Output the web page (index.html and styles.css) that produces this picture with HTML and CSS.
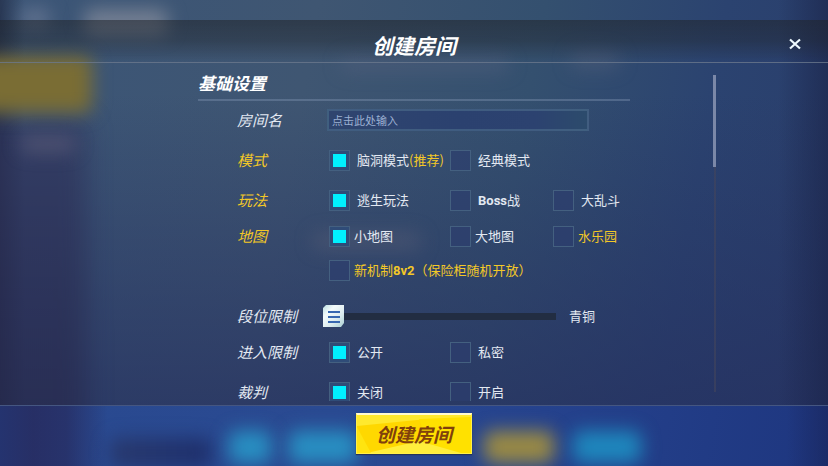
FILE: index.html
```
<!DOCTYPE html>
<html lang="zh-CN">
    <head>
        <meta charset="utf-8">
        <title>创建房间</title>
        <link rel="stylesheet" href="styles.css">
    </head>
    <body>
        <div class="backdrop">
            <div class="glow glow-rail"></div>
            <div class="glow glow-avatar"></div>
            <div class="glow glow-name"></div>
            <div class="glow glow-side"></div>
            <div class="glow glow-tab"></div>
            <div class="glow glow-tab2"></div>
            <div class="glow glow-list"></div>
            <div class="glow glow-center"></div>
        </div>
        <form class="dialog">
            <header class="top">
                <h1>创建房间</h1>
                <button type="button" class="close" aria-label="关闭">
                    <svg width="14" height="12" viewBox="0 0 14 12"><path d="M2 1.5L12 10.5M12 1.5L2 10.5"/></svg>
                </button>
            </header>

            <main class="main">
                <div class="settings">
                    <h2>基础设置</h2>
                    <div class="row first">
                        <label class="name" for="roomname">房间名</label>
                        <input type="text" id="roomname" class="roomname" placeholder="点击此处输入">
                    </div>
                    <div class="row" role="radiogroup" aria-labelledby="n-mode">
                        <span class="name hot" id="n-mode">模式</span>
                        <label class="opt"><input type="radio" name="mode" checked><span>脑洞模式<em>(推荐)</em></span></label>
                        <label class="opt"><input type="radio" name="mode"><span>经典模式</span></label>
                    </div>
                    <div class="row" role="radiogroup" aria-labelledby="n-play">
                        <span class="name hot" id="n-play">玩法</span>
                        <label class="opt"><input type="radio" name="play" checked><span>逃生玩法</span></label>
                        <label class="opt"><input type="radio" name="play"><span><b>Boss</b>战</span></label>
                        <label class="opt"><input type="radio" name="play"><span>大乱斗</span></label>
                    </div>
                    <div class="row near maps" role="radiogroup" aria-labelledby="n-map">
                        <span class="name hot" id="n-map">地图</span>
                        <label class="opt"><input type="radio" name="map" checked><span>小地图</span></label>
                        <label class="opt"><input type="radio" name="map"><span>大地图</span></label>
                        <label class="opt"><input type="radio" name="map"><span><em>水乐园</em></span></label>
                        <label class="opt wide"><input type="radio" name="map"><span><em>新机制<b>8v2</b>（保险柜随机开放）</em></span></label>
                    </div>
                    <div class="row far">
                        <label class="name" for="rank">段位限制</label>
                        <div class="rank">
                            <input type="range" id="rank" min="0" max="6" value="0">
                            <output for="rank">青铜</output>
                        </div>
                    </div>
                    <div class="row near" role="radiogroup" aria-labelledby="n-join">
                        <span class="name" id="n-join">进入限制</span>
                        <label class="opt"><input type="radio" name="join" checked><span>公开</span></label>
                        <label class="opt"><input type="radio" name="join"><span>私密</span></label>
                    </div>
                    <div class="row" role="radiogroup" aria-labelledby="n-judge">
                        <span class="name" id="n-judge">裁判</span>
                        <label class="opt"><input type="radio" name="judge" checked><span>关闭</span></label>
                        <label class="opt"><input type="radio" name="judge"><span>开启</span></label>
                    </div>
                </div>
                <div class="scrollbar"><div class="thumb"></div></div>
            </main>

            <footer class="bottom">
                <div class="glow glow-dark"></div>
                <div class="glow glow-b1"></div>
                <div class="glow glow-b2"></div>
                <div class="glow glow-b3"></div>
                <div class="glow glow-b4"></div>
                <button type="submit" class="create">
                    <svg class="facets" viewBox="0 0 114 38" preserveAspectRatio="none">
                        <path d="M0 0H114V3L60 5L0 11Z" fill="#ffe92e"/>
                        <path d="M62 4L114 2V38H88L70 26Z" fill="#ffe100"/>
                        <path d="M10 38L62 26L104 38Z" fill="#ffee3c"/>
                        <path d="M0 12L14 38H0Z" fill="#ffe410"/>
                    </svg>
                    <span>创建房间</span>
                </button>
            </footer>
        </form>
    </body>
</html>
```

FILE: styles.css
```
* {
    box-sizing: border-box;
}
body {
    margin: 0;
    height: 100vh;
    overflow: hidden;
    color: #e3e9f2;
    font: 13px/20px "Noto Sans CJK SC", sans-serif;
    background: #2b4067;
}
button, input {
    font: inherit;
    color: inherit;
    margin: 0;
}

/* blurred lobby behind the dialog */
.backdrop {
    position: absolute;
    inset: 0;
    overflow: hidden;
    background:
        linear-gradient(90deg, rgba(24,28,50,.5), transparent 3%),
        linear-gradient(270deg, rgba(24,32,68,.55), transparent 6%),
        linear-gradient(180deg, transparent 20%, rgba(37,48,96,.75) 90%),
        linear-gradient(100deg, #3b5577 0%, #3f5672 35%, #34506f 60%, #2b4370 80%, #293d6b 100%);
}
.glow {
    position: absolute;
    filter: blur(9px);
    border-radius: 8px;
}
.glow-rail {
    left: -40px;
    top: 120px;
    bottom: -40px;
    width: 126px;
    filter: blur(12px);
    background: linear-gradient(rgba(46,48,90,.6), rgba(38,40,74,.75));
}
.glow-avatar {
    left: 20px;
    top: 8px;
    width: 30px;
    height: 22px;
    background: rgba(120,132,158,.6);
}
.glow-name {
    left: 84px;
    top: 9px;
    width: 84px;
    height: 26px;
    background: rgba(140,146,160,.7);
}
.glow-side {
    left: -20px;
    top: 55px;
    width: 112px;
    height: 58px;
    background: #7a6d34;
}
.glow-tab {
    left: 20px;
    top: 136px;
    width: 56px;
    height: 16px;
    background: rgba(100,98,125,.6);
}
.glow-tab2 {
    left: 340px;
    top: 56px;
    width: 170px;
    height: 16px;
    background: rgba(90,100,130,.4);
}
.glow-list {
    left: 570px;
    top: 50px;
    width: 50px;
    height: 20px;
    background: rgba(90,100,125,.4);
}
.glow-center {
    left: 312px;
    top: 232px;
    width: 110px;
    height: 18px;
    background: rgba(95,98,120,.4);
}

.dialog {
    position: relative;
    height: 100vh;
    padding-top: 20px;
    display: flex;
    flex-direction: column;
}
.top {
    height: 43px;
    flex: none;
    display: grid;
    grid-template-columns: 1fr auto 1fr;
    align-items: center;
    padding: 8px 26px 0;
    border-bottom: 1px solid rgba(150,168,196,.5);
    background: linear-gradient(rgba(32,36,42,.55), rgba(32,36,42,.4) 50%, rgba(32,36,42,0));
}
h1, h2 {
    margin: 0;
    color: #fff;
    font-style: italic;
    font-weight: bold;
}
h1 {
    grid-column: 2;
    font-size: 21px;
    line-height: 24px;
}
.close {
    justify-self: end;
    display: flex;
    padding: 0 0 2px;
    border: 0;
    background: none;
}
.close path {
    fill: none;
    stroke: #eefaff;
    stroke-width: 2.2;
}

.main {
    flex: 1;
    min-height: 0;
    display: grid;
    grid-template-columns: 1fr minmax(0, 432px) 1fr;
    padding-bottom: 4px;
}
.settings {
    grid-column: 2;
    overflow-y: auto;
    scrollbar-width: none;
}
h2 {
    padding: 8px 0 5px;
    font-size: 17px;
    line-height: 23px;
    border-bottom: 2px solid rgba(130,150,180,.4);
}
.row {
    display: grid;
    grid-template-columns: 92px 121px 103px 1fr;
    align-items: center;
    grid-auto-rows: 22px;
    row-gap: 12px;
    margin-top: 18px;
    padding-left: 39px;
}
.row.first {
    margin-top: 8px;
}
.row.near {
    margin-top: 14px;
}
.row.far {
    margin-top: 24px;
}
.name {
    font-size: 15px;
    font-style: italic;
}
.hot, em {
    color: #f3c827;
}
em {
    font-style: normal;
}
b {
    font-family: Roboto, sans-serif;
    font-weight: bold;
}
.roomname {
    grid-column: 2 / 5;
    width: 262px;
    height: 22px;
    margin-left: -2px;
    padding: 0 3px;
    border: 2px solid rgba(72,104,135,.7);
    background: linear-gradient(90deg, #2f456f, #2b416f 50%, #2c4270 80%, #2c4b6c);
    font-size: 11px;
}
.roomname::placeholder {
    color: #9cb0d2;
}
.opt {
    display: flex;
    align-items: center;
    gap: 7px;
    white-space: nowrap;
}
.maps .opt {
    gap: 4px;
}
.wide {
    grid-column: 2 / 5;
}
.opt input {
    appearance: none;
    flex: none;
    width: 21px;
    height: 21px;
    padding: 3px;
    border: 1px solid #446080;
    background: rgba(44,62,110,.65);
}
.opt input:checked {
    background:
        linear-gradient(#00f0ff, #00f0ff) content-box,
        #2f4c78;
}
.rank {
    grid-column: 2 / 5;
    display: flex;
    align-items: center;
    gap: 13px;
    margin-left: -6px;
}
.rank input {
    appearance: none;
    width: 233px;
    height: 22px;
    background: linear-gradient(#222d42, #222d42) center / 100% 7px no-repeat;
}
.rank input::-webkit-slider-thumb {
    appearance: none;
    width: 21px;
    height: 22px;
    background:
        linear-gradient(#3767b0 2px, transparent 2px, transparent 5px, #3767b0 5px, #3767b0 7px, transparent 7px, transparent 10px, #3767b0 10px) 5px 6px / 12px 12px no-repeat,
        linear-gradient(135deg, #b9dcdf, #f4fbfb 30%, #dcebee 65%, #a9cfd3);
    clip-path: polygon(3px 0, 100% 0, 100% 18px, 18px 100%, 0 100%, 0 3px);
}

.scrollbar {
    width: 3px;
    height: 317px;
    max-height: 100%;
    margin: 12px 0 0 83px;
    background: linear-gradient(90deg, transparent 1px, rgba(66,68,92,.6) 1px);
}
.scrollbar .thumb {
    height: 29%;
    background: #7b88a8;
}

.bottom {
    position: relative;
    height: 61px;
    flex: none;
    overflow: hidden;
    display: flex;
    justify-content: center;
    align-items: flex-start;
    padding-top: 7px;
    border-top: 1px solid #455681;
    background:
        linear-gradient(90deg, rgba(32,30,80,.5), rgba(38,36,84,.7) 4%, rgba(38,36,84,.6) 8%, transparent 13%),
        linear-gradient(270deg, rgba(24,32,80,.5), transparent 5%),
        linear-gradient(100deg, #29498f, #2a4a92 40%, #25428d 65%, #1e367f);
}
.glow-dark {
    left: 110px;
    top: 32px;
    width: 102px;
    height: 30px;
    background: linear-gradient(90deg, #28396e, #1e2f6c);
}
.glow-b1, .glow-b2, .glow-b3, .glow-b4 {
    top: 25px;
    height: 32px;
    background: #288fc2;
}
.glow-b1 {
    left: 229px;
    width: 42px;
}
.glow-b2 {
    left: 289px;
    width: 68px;
}
.glow-b3 {
    left: 484px;
    width: 70px;
    background: #9a8a44;
}
.glow-b4 {
    left: 573px;
    width: 68px;
    background: #1e87bd;
}
.create {
    position: relative;
    width: 116px;
    height: 41px;
    padding: 0;
    border: 1px solid #fff04a;
    border-top: 2px solid #fffbd0;
    box-shadow: 0 1px 1px #24345a;
    background: #ffd800;
    color: #80400c;
    font-size: 19px;
    font-style: italic;
    font-weight: bold;
}
.create span {
    position: relative;
}
.facets {
    position: absolute;
    left: 0;
    top: 0;
    width: 100%;
    height: 100%;
}
```
